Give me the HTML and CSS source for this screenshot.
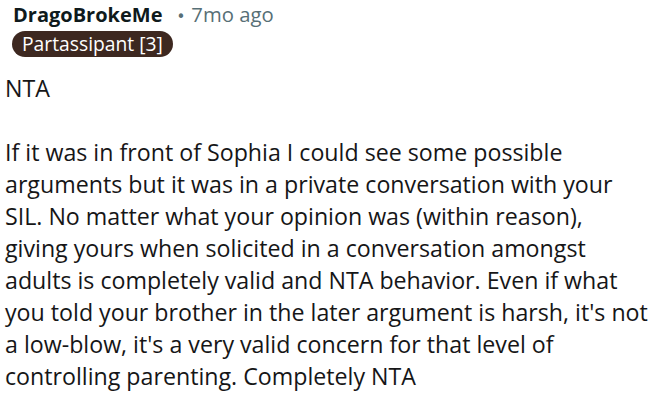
FILE: index.html
```html
<!DOCTYPE html>
<html>
<head>
<meta charset="utf-8">
<link rel="stylesheet" href="styles.css">
</head>
<body>
<div class="comment">
  <div class="meta">
    <div class="meta-line">
      <span class="author">DragoBrokeMe</span>
      <span class="dot">•</span>
      <span class="time">7mo ago</span>
    </div>
    <span class="flair">Partassipant [3]</span>
  </div>
  <div class="body">
    <p>NTA</p>
    <p>
      <span class="line">If it was in front of Sophia I could see some possible</span>
      <span class="line">arguments but it was in a private conversation with your</span>
      <span class="line">SIL. No matter what your opinion was (within reason),</span>
      <span class="line">giving yours when solicited in a conversation amongst</span>
      <span class="line">adults is completely valid and NTA behavior. Even if what</span>
      <span class="line">you told your brother in the later argument is harsh, it's not</span>
      <span class="line">a low-blow, it's a very valid concern for that level of</span>
      <span class="line">controlling parenting. Completely NTA</span>
    </p>
  </div>
</div>
</body>
</html>
```
FILE: styles.css
```css
html, body {
  margin: 0;
  padding: 0;
  background: #ffffff;
}
body {
  font-family: "Open Sans", "Noto Sans", sans-serif;
  color: #161617;
}
.comment {
  padding: 0 5px;
  width: 644px;
}
.meta {
  padding-left: 8px;
}
.meta-line {
  display: flex;
  align-items: baseline;
  height: 28px;
  line-height: 28px;
}
.author {
  font-weight: 700;
  font-size: 20px;
  color: #0f1a1c;
}
.dot {
  margin-left: 14px;
  font-size: 15px;
  font-family: "DejaVu Sans", sans-serif;
  color: #576f76;
}
.time {
  margin-left: 6px;
  font-size: 20.3px;
  color: #576f76;
}
.flair {
  display: inline-block;
  margin-left: -1px;
  margin-top: 3px;
  background: #3d2820;
  color: #ffffff;
  font-size: 19.3px;
  line-height: 26px;
  padding: 0 10px;
  border-radius: 13px;
}
.body {
  font-size: 23.2px;
  line-height: 32px;
}
.body p {
  margin: 15px 0 0;
}
.body p + p {
  margin-top: 32px;
}
.line {
  display: block;
  white-space: nowrap;
}
```
